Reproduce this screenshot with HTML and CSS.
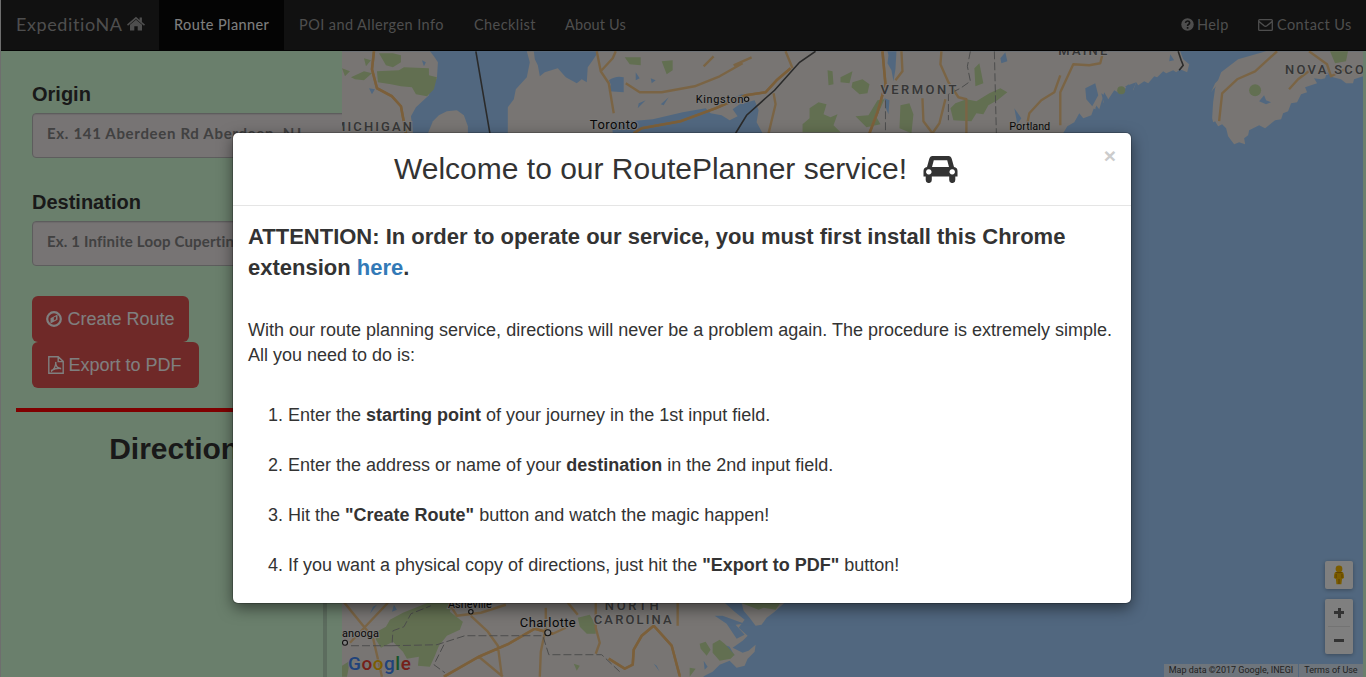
FILE: index.html
```html
<!DOCTYPE html>
<html lang="en">
<head>
<meta charset="utf-8">
<title>ExpeditioNA Route Planner</title>
<link rel="stylesheet" href="styles.css">
</head>
<body>
<div class="page">
  <nav class="navbar">
    <a class="brand"><span class="brand-name">ExpeditioNA</span>
      <svg class="home-icon" viewBox="0 0 18 16"><path d="M9 3.8 15 8.7V14.5h-4.3v-4.2H7.3v4.2H3V8.7z"/><path d="M9 .8 12.6 4V1.4h2.3V6L18 8.6l-1 1.1L9 3 1 9.7 0 8.6z"/></svg>
    </a>
    <a class="nav-item active">Route Planner</a>
    <a class="nav-item poi">POI and Allergen Info</a>
    <a class="nav-item checklist">Checklist</a>
    <a class="nav-item about">About Us</a>
    <div class="nav-right">
      <a class="nav-item help"><svg class="help-icon" viewBox="0 0 14 14"><circle cx="7" cy="7" r="6.7"/><path d="M4.8 5.2Q5.2 3.2 7.1 3.2T9.3 5.1Q9.3 6.3 8 7Q7.1 7.5 7.1 8.6M7.1 9.8v1.7"/></svg>Help</a>
      <a class="nav-item contact"><svg class="mail-icon" viewBox="0 0 15 12"><path d="M1.6.7h11.8q.9 0 .9.9v8.8q0 .9-.9.9H1.6q-.9 0-.9-.9V1.6q0-.9.9-.9zM1 2.6l5.1 4.2q1.4 1.1 2.8 0L14 2.6"/></svg>Contact Us</a>
    </div>
  </nav>

  <main class="content">
    <aside class="sidebar">
      <form class="route-form">
        <label class="field-label">Origin</label>
        <input class="field origin" placeholder="Ex. 141 Aberdeen Rd Aberdeen, NJ">
        <label class="field-label">Destination</label>
        <input class="field destination" placeholder="Ex. 1 Infinite Loop Cupertino, CA">
        <button type="button" class="btn create"><svg class="compass-icon" viewBox="0 0 16 16"><circle cx="8" cy="8" r="6.8"/><path class="solid" d="M11.5 3.5v5.2l-7 3.8V7.3z"/><path class="cut" d="M7.8 6.6 10 5.5v2.8l-2.2 1.2z"/></svg>Create Route</button>
        <button type="button" class="btn export"><svg class="pdf-icon" viewBox="0 0 16 18"><path d="M.8.8h9.4l5 4.6v11.8H.8zM10.2.8v4.8h5M3 15.5c2.6-1.3 5-5.5 4.8-9.5M7.8 6c-.8 3.5 2 6.5 5.4 6.7M3.2 14.6q4.5-2.7 9.8-2.2"/></svg>Export to PDF</button>
      </form>
      <hr class="divider">
      <h2 class="directions">Directions</h2>
      <div class="scroll-edge"></div>
    </aside>

    <section class="map">
      <svg class="map-canvas" viewBox="341 51 1022 626">
        <g class="land">
          <path d="M341 51H429l4 5 4 6-1 16-6 8-2 9-13 12-5 9 2 17H341z"/>
          <path d="M427 133l5-12 6-6 8-4 10-1 7 5 4 11v9z"/>
          <path d="M526 51H1180l3 8 6 5-2 8-7-3-4 3-3-2-7 3-3-2-6 6-3-1-6 7-4-2-6 4-2-3-3 8-5-6-7 10-7-4-6 9-4-7-5 17-4-5-4 11-8 3-4-5-5 9-7 4-6 10H507V107l6-8 2-10 11-12 3-15z"/>
          <path d="M1266 51h97v25l-9 3-1 4-7 0-5-4-8-2-6-5-2 6-4 1-7-1 3 5-12 4 2 5-6 2-4 8-6 1-3 8-5 2-2 6-6 1-10 8-6-3-10 5-1 5-4 3 1 6-6-2-5 2-6-8-2-8-4-4-4 2-3-5-2 1-1-4 1-16 2-14 6-16 17-13z"/>
          <path d="M341 603H724l10 9 10 8-6 8 9 8-5 5-10 7 10 5 6-2 7-6-1 7-7 7-3 7-8 2-7-7-10 4-7 7-8 4-7 6H341z"/>
          <path d="M741 603h43l-10 9-8 6-5 7-6 1-6-8-6-7zm9 11q8 0 13 5l-10-1z"/>
          <path d="M1093 98l4 4-2 7-4-2zM1102 95l3 4-2 4zM1211 92l4-9 9-9-2 6-9 9z"/>
        </g>
        <g class="water">
          <path d="M533 51h65l-6 9-5 7-1 15-5-3-5 4-11-6-8-9-13 4-5 4-2-11-3-6z"/>
          <path d="M612 133l-1-12 18 0 23-2 30-7 23-4 5 5 11 2 8 5 8-4-5-7 7-5 15-4 4 10-2 12 6 11z"/>
          <path d="M608 80q7-5 15-3v15l-15-1 2-7z"/><path d="M725 101l16-7 6 1-12 9zM887 51h9l-1 18-2 12-2-11-4-7 1-8zM884 98l5 2-1 14-3-7z"/>
          <path d="M1085 88l10-5 3 12-6 11-6-7zm16 5 4 15 2-11zm-6 14 5 9 2-5zm30-21 6 8 5-12zM1259 101l5-6 2 5 5 2-5 2zM722 616l22 8-9 1 9 10-8 4-10-15-12-8zM715 642l14 5 5 9-10-7zM653 664l6 8-3-6zM703 661l4 6-3 3z"/>
          <path d="M645 100l-8 8 1-5zM660 104l8-7-5 8zM650 78l5 2-4 3zM635 72l4 6-4 2zM1000 58l5-6 2 9-6 2zM1014 108l7 10-4 6zM1170 54l4 6-5 1zM421 60l4 2-2 4zM368 88l6 1-3 5zM376 605l-7 9 3-7zM393 605l-2 7 5-2z"/>
        </g>
        <g class="park">
          <path d="M376 71l22-1 5-3 25 1v7l8 2-3 12-7 7-11-2-4-7-11-1-10-2-13-2zM378 53l14 0 8 2v7l-8 5-7-2zM363 58l7 2-5 6zM341 68l8 3-5 5zM350 77l13-6 8 2-8 7-9-1zM624 57l16 0v8l-11-1zM661 61l11-1v10l-6 4z"/>
          <path d="M827 70l5 1 1 13-5 1zM840 77l12-6-3 12-9-1zM852 82l10-3 7 5-2 9-8 1-8-7zM809 108l9-6 8 2-3 10 7 3 7-3-4 11 7 7-38 0v-8l7-6zM855 116l13-1 9-15 7-1-8 18 4 7-14 3zM900 105l9-2 4 11-2 19-12-5zM955 103l11-4 10 2 13-8 11-5 7 4-10 8-9 5-5 9-7-1-5 8-18-1-3-12zM974 68l5-5 4 20-8 3z"/>
          <circle cx="1255" cy="90" r="6"/><circle cx="1121" cy="90" r="4"/><path d="M1330 51h18l-2 10-11 2z"/>
          <path d="M374 633l11-6 4-7 13-7 25-10h24l-2 9 13 10-3 8-13 6-8 10-4 10-5 11-12-1 1-9-12 2-4-7-10-10-12 6-5-8zM341 666l8-5-3 16h-5zM577 618l12-3 6 10v9h-9l-7-7zM740 603h40l-5 7-12-2-5 2zM699 644l6-2 5 8-4 6-6-7zM712 644l7-4 5 4 10 11-4 4-11 2-7-8zM573 664l6 2-3 5zM689 668l6 1-6 8z"/>
        </g>
        <g class="road">
          <path d="M373 51l-2 18 5 19 15 8 9 10 5 27M596 51l4 20 8 12 5 30M600 71l12-13 3-7M625 83l14 9 22 0 33-6 25-10 23-13M633 133l8-5 39-7 35-13 30-13 20-3 11-12 14-12M785 51l7 17M773 93l2 11-7 29M882 51l3 33-8 28-8 21M901 51l1 20-7 9M941 51l-1 13 8 18 10 15 8 2 0 34M922 98l1 23 9 12 7-10 6-24M1060 75l-6 17-13 8-12 13-2 10M1060 125v-33l13-28 16 1 11-2 3-12M1277 51l-22 20-18 8-15 14-3 28M1309 51l18 13 4 12 16-8M1289 89l9-10 12-9M341 600l31 38 9 39M387 603l-38 40M448 603l8 13 24-3 25-8M470 616l17 16 10 14 4 31M443 677l35-20 30-13 26-15 18 5 13-6M545 608v20l-5 24-1 25M478 657l24 20M595 603v25l4 15-4 11M608 659l16 10 8-4 1-15 8-14 12-10 18 20 8 30 1 11M677 603v23M577 615l-10-12M733 65l18-8M703 66l10-10"/>
        </g>
        <path class="road core" d="M373 51l-2 18 5 19 15 8 9 10 5 27M633 133l8-5 39-7 35-13 30-13 20-3 11-12 14-12M882 51l3 33-8 28-8 21M443 677l35-20 30-13 26-15 18 5M608 659l16 10 8-4 1-15 8-14 12-10 18 20 8 30"/>
        <path class="border" d="M475 51l14 82M735 133l11-18 20-18 8-7 25-28 16-11M1178 51l3 9 2 5-4 5"/>
        <path class="state" d="M885 100v33M970 51l-3 15 3 15-10 7-12 6 0 26M994 51l2 82M350 646h41l1-15 11-4 7-13 20-8M391 646l45-1 28-9 78 0 6 19h53l19 18M443 645l-10 20 11 8"/>
        <g class="labels region">
          <text x="333" y="131" textLength="78">MICHIGAN</text><text x="880" y="94" textLength="76">VERMONT</text><text x="1058" y="55" textLength="49">MAINE</text><text x="1285" y="74" textLength="79">NOVA SCO</text><text x="604" y="610" textLength="54">NORTH</text><text x="593" y="624" textLength="78">CAROLINA</text>
        </g>
        <g class="labels city">
          <text x="589" y="129" textLength="48">Toronto</text><text class="small" x="695" y="103" textLength="48">Kingston</text><text class="small" x="1009" y="130" textLength="41">Portland</text><text x="519" y="627" textLength="56">Charlotte</text><text class="small" x="447" y="608" textLength="44">Asheville</text><text class="small" x="341" y="637" textLength="37">anooga</text>
        </g>
        <g class="dots"><circle cx="746" cy="99" r="2.2"/><circle cx="470" cy="612" r="2.2"/><circle cx="344" cy="643" r="2.5"/><circle cx="547" cy="633" r="3"/></g>
        <text class="logo" x="347" y="670" textLength="63"><tspan class="blue">G</tspan><tspan class="red">o</tspan><tspan class="yellow">o</tspan><tspan class="blue">g</tspan><tspan class="green">l</tspan><tspan class="red">e</tspan></text>
      </svg>
      <div class="map-controls">
        <div class="pegman"><svg class="pegman-icon" viewBox="0 0 12 20"><path d="M2.3 7Q1 8 .9 13l2 1 .5 5.3h5l.6-5.3 2-1Q11 8 9.7 7z"/><circle cx="6" cy="4" r="3.4"/><path class="shade" d="M3 7.6h6M6 14v5M3.1 9v4M9 9v4"/></svg></div>
        <div class="zoom"><i class="plus"></i><i class="minus"></i></div>
      </div>
      <div class="attribution"><span class="data">Map data ©2017 Google, INEGI</span><span class="terms">Terms of Use</span></div>
    </section>
  </main>
</div>

<div class="backdrop">
  <div class="modal">
    <header class="modal-header">
      <h1 class="modal-title">Welcome to our RoutePlanner service!</h1>
      <svg class="car-icon" viewBox="0 0 35 28"><path fill-rule="evenodd" d="M9.5 1H25.5Q28 1 28.8 4L31 12Q34.5 12.5 34.5 16V21.5H32.3V25A2.8 2.8 0 0 1 26.2 25V21.5H8.8V25A2.8 2.8 0 0 1 2.7 25V21.5H.5V16Q.5 12.5 4 12L6.2 4Q7 1 9.5 1zM10.8 5.2 9 12H26L24.2 5.2zM5.8 14.2a2.7 2.7 0 1 0 .01 0zM29.2 14.2a2.7 2.7 0 1 0 .01 0z"/></svg>
      <span class="close">×</span>
    </header>
    <div class="modal-body">
      <p class="attention">ATTENTION: In order to operate our service, you must first install this Chrome<br>extension <a class="link">here</a>.</p>
      <p class="intro">With our route planning service, directions will never be a problem again. The procedure is extremely simple.<br>All you need to do is:</p>
      <ol class="steps">
        <li>Enter the <b>starting point</b> of your journey in the 1st input field.</li>
        <li>Enter the address or name of your <b>destination</b> in the 2nd input field.</li>
        <li>Hit the <b>"Create Route"</b> button and watch the magic happen!</li>
        <li>If you want a physical copy of directions, just hit the <b>"Export to PDF"</b> button!</li>
      </ol>
    </div>
  </div>
</div>
</body>
</html>
```
FILE: styles.css
```css
* { box-sizing: border-box; }
body { margin: 0; overflow: hidden; font-family: "Liberation Sans", Arial, sans-serif; color: #333; }
.page { display: flex; flex-direction: column; width: 1366px; height: 677px; padding-left: 1px; background: #ddd; overflow: hidden; }

/* Navigation */
.navbar { display: flex; flex: none; height: 51px; background: #222; border-bottom: 1px solid #080808; font-family: Lato, sans-serif; color: #9d9d9d; white-space: nowrap; }
.brand { display: flex; align-items: center; justify-content: space-between; width: 158px; padding: 0 14px 2px 15px; font-size: 18px; }
.brand-name { letter-spacing: .6px; }
.home-icon { width: 18px; height: 16px; fill: #9d9d9d; }
.nav-item { display: flex; align-items: center; padding: 0 15px 1px; font-size: 14.5px; letter-spacing: .42px; }
.active { width: 125px; background: #080808; color: #fff; }
.poi { width: 175px; }
.checklist { width: 91px; }
.about { width: 91px; letter-spacing: .15px; }
.nav-right { display: flex; margin-left: auto; }
.help { width: 77px; gap: 3px; }
.contact { width: 123px; padding-right: 13px; gap: 4px; }
.help-icon { flex: none; width: 13px; height: 13px; fill: #9d9d9d; }
.help-icon path { fill: none; stroke: #222; stroke-width: 1.8; }
.mail-icon { flex: none; width: 15px; height: 12px; fill: none; stroke: #9d9d9d; stroke-width: 1.3; }

/* Sidebar */
.content { display: flex; flex: 1; min-height: 0; padding-right: 3px; background: #d5ffd9; }
.sidebar { position: relative; flex: none; width: 341px; padding: 0 15px; overflow: hidden; }
.route-form { display: flex; flex-direction: column; align-items: flex-start; padding: 28px 16px 0; }
.field-label { height: 30px; margin-bottom: 4px; font-size: 20px; font-weight: 700; line-height: 30px; }
.field { flex: none; width: 330px; height: 45px; margin-bottom: 29px; padding: 0 14px 5px; border: 1px solid #bbb; border-radius: 4px; background: #eee8e9; box-shadow: inset 0 1px 1px rgba(0,0,0,.08); font: 700 15px Lato, sans-serif; }
.origin { letter-spacing: .68px; }
.destination { letter-spacing: .17px; }
.field::placeholder { color: #828282; opacity: 1; }
.btn { display: flex; align-items: center; justify-content: center; height: 46px; padding: 0; border: 0; border-radius: 6px; background: #df5250; color: #fff; font: 18px "Liberation Sans", Arial, sans-serif; }
.create { width: 157px; margin-top: 1px; gap: 5px; }
.export { width: 167px; gap: 4px; padding-right: 1px; }
.compass-icon { width: 16px; height: 16px; fill: none; stroke: #fff; stroke-width: 2.2; }
.compass-icon .solid { fill: #fff; stroke: none; }
.compass-icon .cut { fill: #df5250; stroke: none; }
.pdf-icon { width: 16px; height: 18px; fill: none; stroke: #fff; stroke-width: 1.4; }
.divider { height: 4px; margin: 20px 0 19px; border: 0; background: #f00; }
.directions { margin: 0; padding-left: 22px; text-align: center; font-size: 30px; line-height: 36px; }
.scroll-edge { position: absolute; right: 15px; bottom: 0; width: 4px; height: 90px; background: #b9d9bd; }

/* Map */
.map { position: relative; flex: 1; min-width: 0; font-family: Roboto, sans-serif; }
.map-canvas { display: block; width: 100%; height: 100%; background: #a3cffe; overflow: hidden; }
.land { fill: #f0ebe6; }
.water { fill: #a3cffe; }
.park { fill: #c4dea2; }
.road { fill: none; stroke: #f5c98a; stroke-width: 2.4; stroke-linejoin: round; }
.core { stroke: #f7bf74; stroke-width: 2.6; }
.border { fill: none; stroke: #555; stroke-width: 1.6; }
.state { fill: none; stroke: #999; stroke-width: 1; stroke-dasharray: 8 3; }
.labels { paint-order: stroke; stroke: #f4f0ec; stroke-width: 2px; }
.region { fill: #6c6c6c; font-size: 13px; font-weight: 500; }
.city { fill: #111; font-size: 13px; }
.small { font-size: 11px; }
.dots { fill: #fff; stroke: #222; stroke-width: 1.1; }
.logo { font: 500 19px Roboto, sans-serif; paint-order: stroke; stroke: #eee; stroke-width: 1px; }
.blue { fill: #4285f4; }
.red { fill: #ea4335; }
.yellow { fill: #fbbc05; }
.green { fill: #34a853; }
.map-controls { position: absolute; right: 10px; bottom: 23px; display: flex; flex-direction: column; gap: 10px; }
.pegman, .zoom { display: flex; align-items: center; justify-content: center; width: 28px; height: 28px; border-radius: 2px; background: #fff; box-shadow: 0 1px 4px rgba(0,0,0,.3); }
.pegman-icon { width: 12px; height: 20px; fill: #f6b900; }
.shade { fill: none; stroke: #b27a00; stroke-width: .9; }
.zoom { flex-direction: column; height: 55px; }
.plus, .minus { display: grid; place-items: center; width: 22px; flex: 1; }
.plus { border-bottom: 1px solid #e6e6e6; }
.plus::before, .plus::after, .minus::before { content: ""; grid-area: 1 / 1; width: 10px; height: 3px; background: #666; }
.plus::after { width: 3px; height: 10px; }
.attribution { position: absolute; right: 0; bottom: 0; display: flex; gap: 1px; height: 13px; font-size: 9px; line-height: 13px; color: #444; white-space: nowrap; }
.data, .terms { background: rgba(245,245,245,.7); text-align: center; }
.data { width: 134px; }
.terms { width: 64px; }

/* Dialog */
.backdrop { position: absolute; inset: 0; display: flex; align-items: flex-start; padding: 133px 0 0 233px; background: rgba(0,0,0,.5); }
.modal { width: 898px; height: 470px; border-radius: 5px; background: #fff; box-shadow: 0 5px 15px rgba(0,0,0,.5), 0 0 0 1px rgba(0,0,0,.2); }
.modal-header { position: relative; display: flex; align-items: center; height: 73px; padding: 0 0 1px 161px; gap: 16px; border-bottom: 1px solid #e5e5e5; }
.modal-title { margin: 0; font-size: 30px; font-weight: 400; line-height: 42px; white-space: nowrap; }
.car-icon { width: 35px; height: 28px; fill: #333; }
.close { position: absolute; top: 12px; right: 15px; font-size: 21px; font-weight: 700; line-height: 21px; color: #ccc; }
.modal-body { padding: 15px; font-size: 18px; line-height: 25px; white-space: nowrap; }
.attention { margin: 0 0 34px; font-size: 22px; font-weight: 700; line-height: 31.25px; }
.link { color: #337ab7; }
.intro { margin: 0 0 35px; }
.steps { margin: 0; padding-left: 40px; }
.steps li { margin-bottom: 25px; }
```
